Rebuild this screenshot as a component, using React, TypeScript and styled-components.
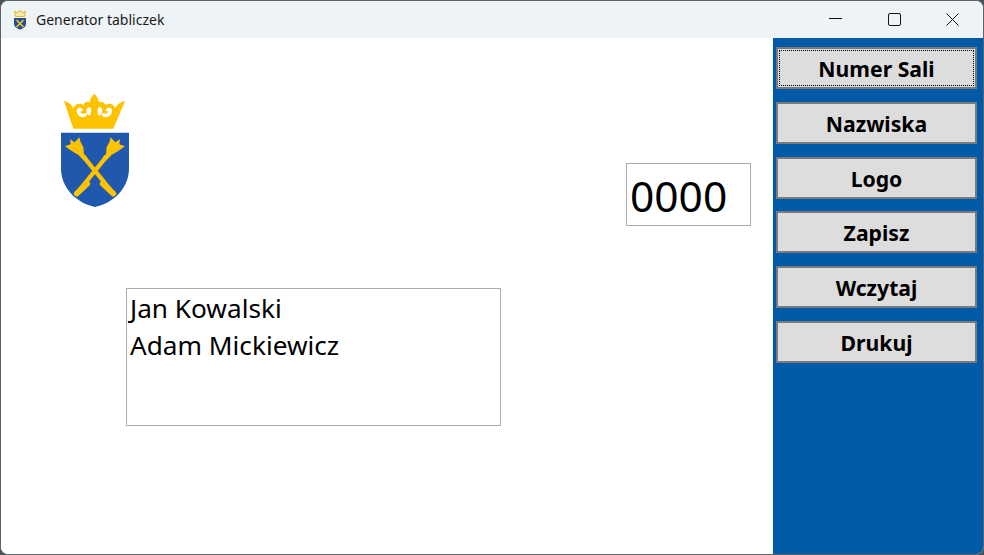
import React from "react";
import styled, { createGlobalStyle } from "styled-components";

const Global = createGlobalStyle`
  html, body { margin: 0; padding: 0; width: 984px; height: 555px; overflow: hidden; background: #4a5358; }
  body { font-family: "Noto Sans", "Open Sans", "Liberation Sans", sans-serif; }
`;

const Win = styled.div`
  width: 984px; height: 555px; box-sizing: border-box;
  display: flex; flex-direction: column;
  border-radius: 8px; overflow: hidden; background: #fff;
  border: 1px solid #5d6468;
`;
const TitleBar = styled.header`
  height: 37px; flex: none; display: flex; align-items: center;
  background: #eef3f7; padding: 0 1px 0 12px;
`;
const Title = styled.span`
  font-size: 14px; color: #1a1a1a; margin: -1px 0 0 9px; flex: 1;
`;
const Controls = styled.div`display: flex; height: 100%; margin-top: -1px;`;
const Control = styled.button`
  width: 58.5px; height: 100%; border: 0; background: transparent; padding: 0;
  display: flex; align-items: center; justify-content: center;
`;
const Body = styled.main`flex: 1; display: flex; min-height: 0;`;
const Canvas = styled.section`flex: 1; position: relative; background: #fff;`;
const Logo = styled.svg`position: absolute; left: 49px; top: 47px;`;
const NumberBox = styled.div`
  position: absolute; left: 625px; top: 125px; width: 125px; height: 63px; box-sizing: border-box;
  border: 1px solid #acacb4; background: #fff; font-size: 42.5px; line-height: 63px; padding-left: 3px; color: #000;
`;
const NamesBox = styled.div`
  position: absolute; left: 125px; top: 250px; width: 375px; height: 138px; box-sizing: border-box;
  border: 1px solid #acacb4; background: #fff; font-size: 26.2px; line-height: 37px; padding: 1px 0 0 3px; color: #000;
`;
const Side = styled.aside`
  width: 210px; flex: none; box-sizing: border-box; background: #005aa7;
  padding: 9px 6px 0 3px; display: flex; flex-direction: column; gap: 12.8px;
`;
const Btn = styled.button<{ $focus?: boolean }>`
  height: 42px; width: 201px; flex: none; box-sizing: border-box; border: 2px solid #7a7a7a; background: #dddddd;
  font: 700 21.2px "Noto Sans", "Open Sans", sans-serif; color: #000; padding: 1px 0 0;
  outline: ${(p) => (p.$focus ? "1px dotted #000" : "none")}; outline-offset: -4px;
`;

const GOLD = "#fdc300";
const BLUE = "#1f58ac";

/* Drawn in the coordinates of a 3x view of the emblem */
const LogoArt = () => (
  <Logo width="90" height="130" viewBox="0 0 270 390">
    {/* crown */}
    <path
      d="M42 48 C58 52 66 60 70 70 C74 56 90 52 100 60 C104 50 114 48 120 52 C118 44 124 36 133 26 C142 36 148 44 146 52 C152 48 162 50 166 60 C176 52 192 56 196 70 C200 60 208 52 225 48 L190 131 H70 Z"
      fill={GOLD}
    />
    <path
      d="M80 80 C78 70 90 64 97 72 C100 78 94 82 90 78 C92 86 102 88 110 84 C114 92 104 98 94 96 C86 94 82 88 80 80 Z"
      fill="#fff"
    />
    <path
      d="M186 80 C188 70 176 64 169 72 C166 78 172 82 176 78 C174 86 164 88 156 84 C152 92 162 98 172 96 C180 94 184 88 186 80 Z"
      fill="#fff"
    />
    <path d="M120 66 C125 74 125 84 119 92 C112 90 107 80 110 72 C113 68 117 66 120 66 Z" fill="#fff" />
    <path d="M146 66 C141 74 141 84 147 92 C154 90 159 80 156 72 C153 68 149 66 146 66 Z" fill="#fff" />
    {/* shield */}
    <path d="M33 143 H237 V250 C237 310 190 355 135 366 C80 355 33 310 33 250 Z" fill={BLUE} />
    {/* sceptres */}
    <g stroke={GOLD} strokeLinecap="butt" fill="none">
      <path d="M100 214 L184 318" strokeWidth="13" />
      <path d="M170 214 L86 318" strokeWidth="13" />
      <path d="M158 296 L190 326" strokeWidth="17" strokeLinecap="round" />
      <path d="M112 296 L80 326" strokeWidth="17" strokeLinecap="round" />
      <path d="M90 205 L107 222" strokeWidth="14" />
      <path d="M180 205 L163 222" strokeWidth="14" />
    </g>
    <path d="M45 184 L62 178 L60 163 L74 172 L88 157 L92 172 L100 186 L102 206 L94 212 L80 207 L62 196 Z" fill={GOLD} />
    <path d="M225 184 L208 178 L210 163 L196 172 L182 157 L178 172 L170 186 L168 206 L176 212 L190 207 L208 196 Z" fill={GOLD} />
  </Logo>
);

const Icon = () => (
  <svg width="14" height="20" viewBox="0 0 14 20">
    <path d="M1.5 1 L3.5 3 L7 0.5 L10.5 3 L12.5 1 L11.5 6.5 H2.5 Z" fill="#f3e9b4" stroke="#e2b400" strokeWidth=".9" />
    <path d="M1 8 H13 V14 C13 17 9 19 7 19.6 C5 19 1 17 1 14 Z" fill="#1e4f9e" />
    <path d="M3.5 10 L10.5 17 M10.5 10 L3.5 17" stroke="#f5c518" strokeWidth="1.7" />
  </svg>
);

export default function App() {
  return (
    <>
      <Global />
      <Win>
        <TitleBar>
          <Icon />
          <Title>Generator tabliczek</Title>
          <Controls>
            <Control aria-label="min"><svg width="13" height="12"><path d="M0 5.5 H13" stroke="#111" /></svg></Control>
            <Control aria-label="max"><svg width="13" height="13"><rect x=".5" y=".5" width="12" height="12" rx="1.5" fill="none" stroke="#111" /></svg></Control>
            <Control aria-label="close"><svg width="13" height="13"><path d="M.5 .5 L12.5 12.5 M12.5 .5 L.5 12.5" stroke="#111" /></svg></Control>
          </Controls>
        </TitleBar>
        <Body>
          <Canvas>
            <LogoArt />
            <NumberBox>0000</NumberBox>
            <NamesBox>Jan Kowalski<br />Adam Mickiewicz</NamesBox>
          </Canvas>
          <Side>
            <Btn $focus>Numer Sali</Btn>
            <Btn>Nazwiska</Btn>
            <Btn>Logo</Btn>
            <Btn>Zapisz</Btn>
            <Btn>Wczytaj</Btn>
            <Btn>Drukuj</Btn>
          </Side>
        </Body>
      </Win>
    </>
  );
}
